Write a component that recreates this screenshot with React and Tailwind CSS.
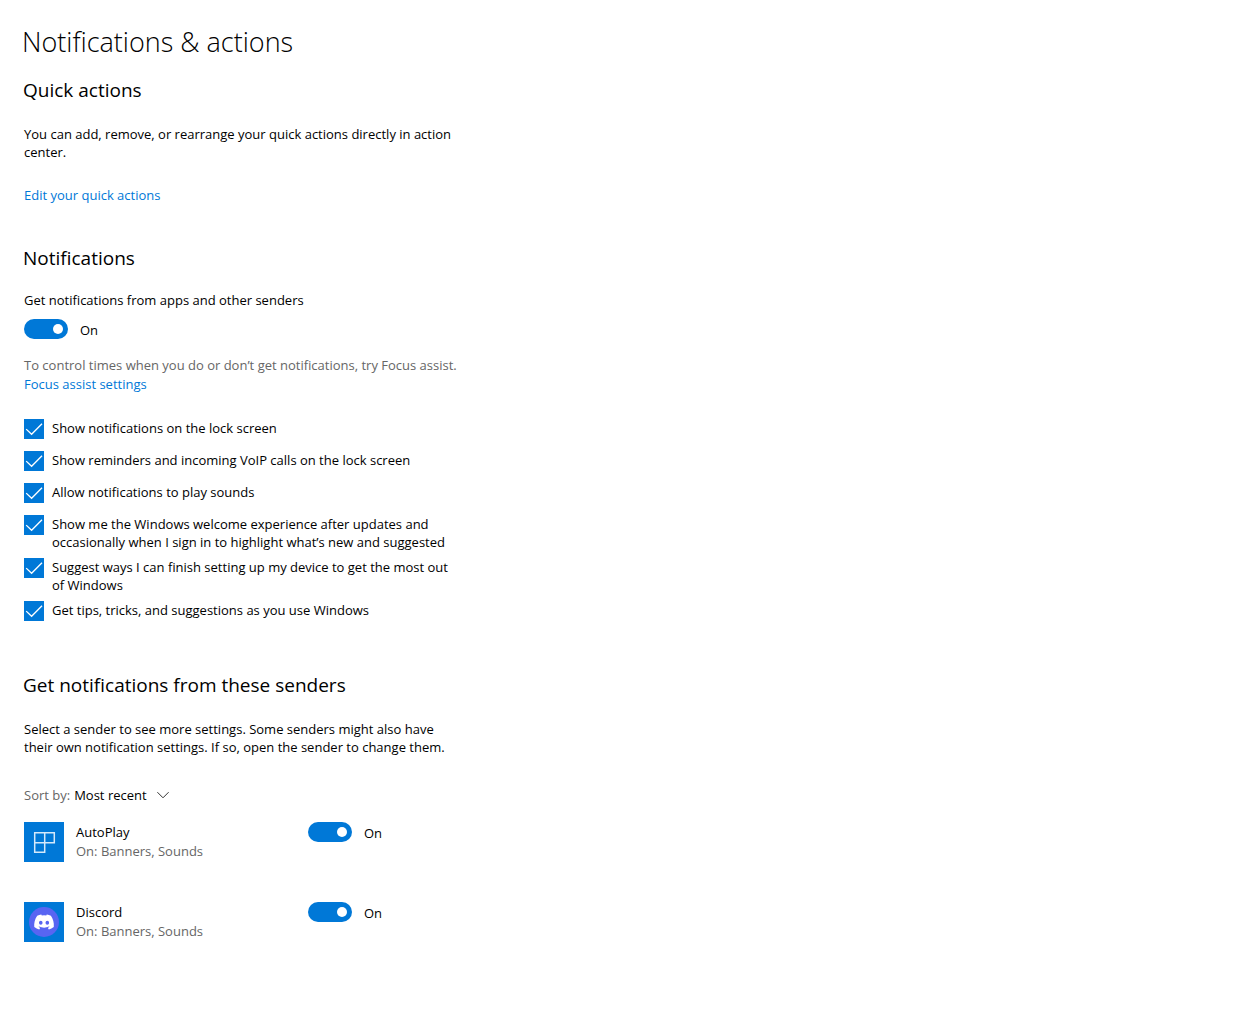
import { useState } from "react";

function Toggle({ label }) {
  const [on, setOn] = useState(true);
  return (
    <label className="flex w-fit items-center gap-3">
      <input
        type="checkbox"
        role="switch"
        aria-label={label}
        checked={on}
        onChange={() => setOn(!on)}
        className="flex h-5 w-11 shrink-0 appearance-none items-center justify-start rounded-full bg-[#999999] px-[5px] before:block before:size-[10px] before:rounded-full before:bg-white checked:justify-end checked:bg-[#0078d7]"
      />
      <span className="pt-px">{on ? "On" : "Off"}</span>
    </label>
  );
}

function Check({ children }) {
  return (
    <label className="flex items-start gap-2">
      <span className="grid size-5 shrink-0">
        <input
          type="checkbox"
          defaultChecked
          className="peer col-start-1 row-start-1 size-5 appearance-none border-2 border-[#333333] checked:border-0 checked:bg-[#0078d7]"
        />
        <svg
          viewBox="0 0 20 20"
          fill="none"
          stroke="white"
          strokeWidth="1.3"
          className="pointer-events-none col-start-1 row-start-1 hidden size-5 peer-checked:block"
          aria-hidden="true"
        >
          <path d="M2.2 10.1 7.6 15.3 18 4.8" />
        </svg>
      </span>
      <span>{children}</span>
    </label>
  );
}

function AutoPlayIcon() {
  return (
    <svg viewBox="0 0 40 40" className="size-10" fill="none" aria-hidden="true">
      <path d="M10.7 10.7H30.3V20.8H20.7V30.3H10.7ZM20.7 10.7V20.8M10.7 20.8H20.7" stroke="#d5e9fa" strokeWidth="1.5" />
    </svg>
  );
}

function DiscordIcon() {
  return (
    <svg viewBox="0 0 40 40" className="size-10" aria-hidden="true">
      <circle cx="20" cy="20" r="15" fill="#5865f2" />
      <g transform="translate(10.2 10.1) scale(0.82)">
        <path
          fill="white"
          d="M20.317 4.37a19.79 19.79 0 0 0-4.885-1.515.074.074 0 0 0-.079.037c-.21.375-.444.864-.608 1.25a18.27 18.27 0 0 0-5.487 0 12.64 12.64 0 0 0-.617-1.25.077.077 0 0 0-.079-.037A19.736 19.736 0 0 0 3.677 4.37a.07.07 0 0 0-.032.027C.533 9.046-.32 13.58.099 18.057a.082.082 0 0 0 .031.057 19.9 19.9 0 0 0 5.993 3.03.078.078 0 0 0 .084-.028c.462-.63.874-1.295 1.226-1.994a.076.076 0 0 0-.041-.106 13.107 13.107 0 0 1-1.872-.892.077.077 0 0 1-.008-.128c.126-.094.252-.192.372-.291a.074.074 0 0 1 .077-.01c3.928 1.793 8.18 1.793 12.062 0a.074.074 0 0 1 .078.009c.12.099.246.198.373.292a.077.077 0 0 1-.006.127 12.3 12.3 0 0 1-1.873.892.077.077 0 0 0-.041.107c.36.698.772 1.362 1.225 1.993a.076.076 0 0 0 .084.028 19.84 19.84 0 0 0 6.002-3.03.077.077 0 0 0 .032-.054c.5-5.177-.838-9.674-3.549-13.66a.061.061 0 0 0-.031-.03zM8.02 15.33c-1.183 0-2.157-1.085-2.157-2.419 0-1.333.956-2.419 2.157-2.419 1.21 0 2.176 1.096 2.157 2.42 0 1.333-.956 2.418-2.157 2.418zm7.975 0c-1.183 0-2.157-1.085-2.157-2.419 0-1.333.955-2.419 2.157-2.419 1.21 0 2.176 1.096 2.157 2.42 0 1.333-.946 2.418-2.157 2.418z"
        />
      </g>
    </svg>
  );
}

function Sender({ name, icon }) {
  return (
    <li className="flex items-start">
      <button type="button" className="flex w-[284px] items-start gap-3 text-left">
        <span className="size-10 bg-[#0078d7]">{icon}</span>
        <span className="flex flex-col gap-px pt-px">
          <span>{name}</span>
          <span className="text-[#666666]">On: Banners, Sounds</span>
        </span>
      </button>
      <Toggle label={name + " notifications"} />
    </li>
  );
}

function Heading({ children }) {
  return <h2 className="-ml-px text-[19px] leading-7">{children}</h2>;
}

export default function App() {
  return (
    <main className="min-h-screen bg-white px-6 py-6 font-['Open_Sans',sans-serif] text-[13px] leading-[18px] text-black">
      <div className="max-w-[438px]">
        <h1 className="-ml-0.5 text-[27px] leading-9 font-light">Notifications &amp; actions</h1>

        <section className="mt-4">
          <Heading>Quick actions</Heading>
          <p className="mt-[21px]">You can add, remove, or rearrange your quick actions directly in action center.</p>
          <a href="#quick-actions" className="mt-[25px] block w-fit text-[#0078d7]">Edit your quick actions</a>
        </section>

        <section className="mt-10">
          <Heading>Notifications</Heading>
          <p className="mt-[19px] mb-2.5">Get notifications from apps and other senders</p>
          <Toggle label="Get notifications from apps and other senders" />
          <p className="mt-[17px] text-[#666666]">To control times when you do or don’t get notifications, try Focus assist.</p>
          <a href="#focus-assist" className="mt-px block w-fit text-[#0078d7]">Focus assist settings</a>
          <div className="mt-[26px] flex flex-col">
            <div className="flex flex-col gap-3">
              <Check>Show notifications on the lock screen</Check>
              <Check>Show reminders and incoming VoIP calls on the lock screen</Check>
              <Check>Allow notifications to play sounds</Check>
              <Check>Show me the Windows welcome experience after updates and occasionally when I sign in to highlight what’s new and suggested</Check>
            </div>
            <div className="mt-[7px] flex flex-col gap-[7px]">
              <Check>Suggest ways I can finish setting up my device to get the most out of Windows</Check>
              <Check>Get tips, tricks, and suggestions as you use Windows</Check>
            </div>
          </div>
        </section>

        <section className="mt-[50px]">
          <Heading>Get notifications from these senders</Heading>
          <p className="mt-[21px]">Select a sender to see more settings. Some senders might also have their own notification settings. If so, open the sender to change them.</p>
          <div className="mt-[30px] flex items-center">
            <label htmlFor="sort" className="mr-1 text-[#666666]">Sort by:</label>
            <span className="grid items-center">
              <select id="sort" className="col-start-1 row-start-1 appearance-none bg-transparent pr-[22px]">
                <option>Most recent</option>
                <option>Name</option>
              </select>
              <svg viewBox="0 0 12 8" className="pointer-events-none col-start-1 row-start-1 h-2 w-3 justify-self-end" fill="none" stroke="#333333" aria-hidden="true">
                <path d="M0.4 1.2 6 6.8 11.6 1.2" />
              </svg>
            </span>
          </div>
          <ul className="mt-[18px] flex flex-col gap-10">
            <Sender name="AutoPlay" icon={<AutoPlayIcon />} />
            <Sender name="Discord" icon={<DiscordIcon />} />
          </ul>
        </section>
      </div>
    </main>
  );
}
